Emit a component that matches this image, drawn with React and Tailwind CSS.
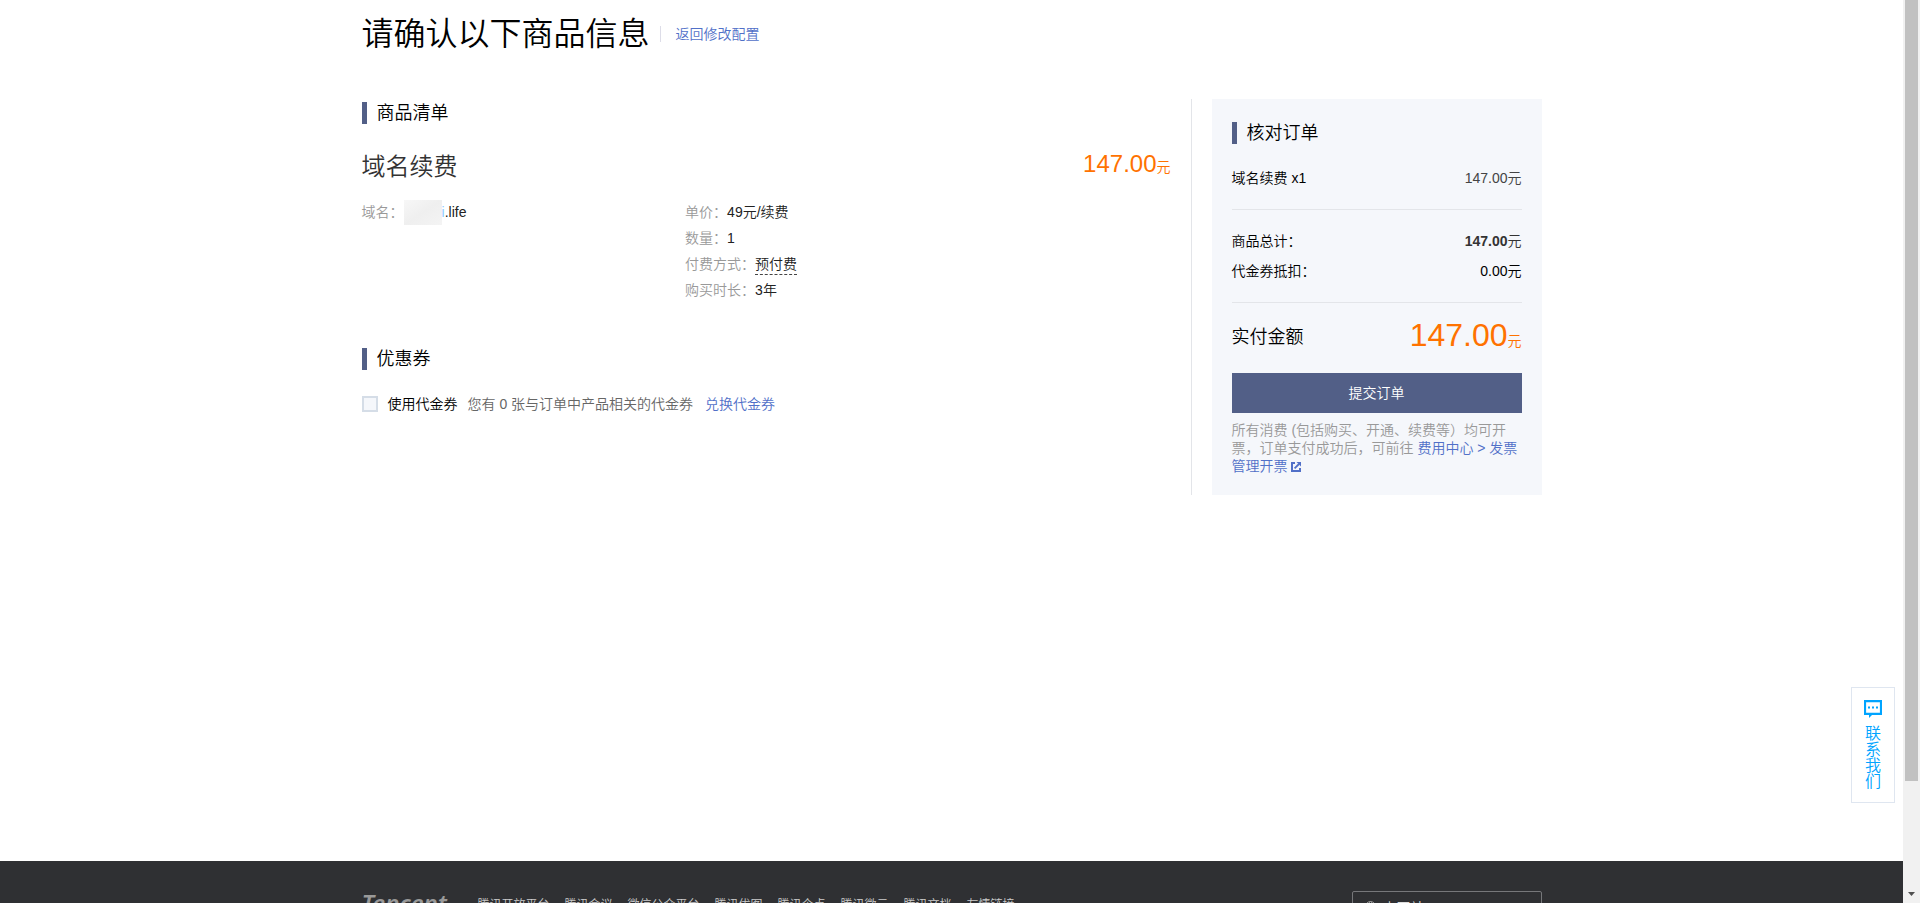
import React from "react";

const footerLinks = [
  "腾讯开放平台",
  "腾讯会议",
  "微信公众平台",
  "腾讯优图",
  "腾讯企点",
  "腾讯微云",
  "腾讯文档",
  "友情链接",
];

function SectionTitle({ children }) {
  return (
    <h2 className="flex h-[22px] items-center border-l-5 border-[#525f87] pl-[10px] text-lg leading-[22px]">
      {children}
    </h2>
  );
}

function Detail({ label, children }) {
  return (
    <div className="flex h-[26px] items-center">
      <dt className="text-[#999]">{label}：</dt>
      <dd className="text-[#222]">{children}</dd>
    </div>
  );
}

function ProductList() {
  return (
    <section>
      <SectionTitle>商品清单</SectionTitle>
      <div className="mt-6 flex items-end justify-between">
        <h3 className="text-2xl leading-8 text-[#333]">域名续费</h3>
        <p className="leading-8 text-[#ff7200]">
          <span className="text-2xl leading-8">147.00</span>元
        </p>
      </div>
      <div className="mt-4 flex">
        <dl className="w-2/5">
          <Detail label="域名">
            <span className="flex items-center">
              <span className="h-[25px] w-[38px] bg-linear-to-br from-[#f7f7f7] via-[#efefef] to-[#f4f4f4]" />
              <span className="text-[#8ccbff]">i</span>.life
            </span>
          </Detail>
        </dl>
        <dl className="flex-1">
          <Detail label="单价">49元/续费</Detail>
          <Detail label="数量">1</Detail>
          <Detail label="付费方式">
            <span className="block border-b border-dashed border-[#444] leading-5">预付费</span>
          </Detail>
          <Detail label="购买时长">3年</Detail>
        </dl>
      </div>
    </section>
  );
}

function Coupons() {
  return (
    <section className="mt-[45px]">
      <SectionTitle>优惠券</SectionTitle>
      <div className="mt-6 flex items-center leading-5">
        <input
          id="voucher"
          type="checkbox"
          className="size-4 appearance-none border-2 border-[#d5dde7] bg-[#f5f7fb] checked:bg-[#525f87]"
        />
        <label htmlFor="voucher" className="pl-[10px]">
          使用代金券
        </label>
        <span className="ml-[10px] text-[#666]">您有 0 张与订单中产品相关的代金券</span>
        <a href="#redeem" className="ml-3 text-[#5170c8]">
          兑换代金券
        </a>
      </div>
    </section>
  );
}

function ExternalIcon() {
  return (
    <svg className="ml-[3px] inline-block size-[10px] align-[-1px]" viewBox="0 0 10 10" fill="none" stroke="currentColor" aria-hidden="true">
      <path d="M4 1H1v8h8V6" strokeWidth="2" />
      <path d="M3.6 6.4 8 2" strokeWidth="1.8" />
      <path d="M5.5 0H10v4.5z" fill="currentColor" stroke="none" />
    </svg>
  );
}

function OrderSummary() {
  return (
    <aside className="w-[330px] shrink-0 bg-[#f5f7fb] px-5 pt-[23px] pb-5">
      <SectionTitle>核对订单</SectionTitle>
      <div className="mt-6 flex justify-between border-b border-[#e3e5e9] pb-[21px] leading-5">
        <span>域名续费 x1</span>
        <span className="text-[#444]">147.00元</span>
      </div>
      <div className="mt-[21px] flex flex-col gap-[10px] border-b border-[#e3e5e9] pb-[21px] leading-5">
        <div className="flex justify-between">
          <span>商品总计：</span>
          <span className="text-[#333]">
            <b>147.00</b>元
          </span>
        </div>
        <div className="flex justify-between">
          <span>代金券抵扣：</span>
          <span>0.00元</span>
        </div>
      </div>
      <div className="flex items-end justify-between pt-4">
        <span className="pb-1 text-lg leading-8">实付金额</span>
        <span className="leading-8 text-[#ff7200]">
          <span className="text-[32px] leading-8">147.00</span>元
        </span>
      </div>
      <button type="button" className="mt-4 h-10 w-full bg-[#525f87] text-white">
        提交订单
      </button>
      <p className="mt-2 leading-[18px] text-[#999]">
        所有消费 (包括购买、开通、续费等）均可开票，订单支付成功后，可前往{" "}
        <a href="#invoice" className="text-[#5170c8]">
          费用中心 &gt; 发票管理开票
          <ExternalIcon />
        </a>
      </p>
    </aside>
  );
}

function ContactWidget() {
  return (
    <a
      href="#contact"
      className="absolute right-2 bottom-[100px] flex h-[116px] w-11 flex-col items-center border border-[#dfe6f0] bg-white pt-3 text-base leading-4 text-[#00a4ff]"
    >
      <svg className="mb-2 size-[18px]" viewBox="0 0 18 18" fill="none" aria-hidden="true">
        <path d="M1 1.2h16v12.6H1z" stroke="currentColor" strokeWidth="2.2" />
        <path d="M5 13h5l-5 5z" fill="currentColor" />
        <path d="M4 6.5h2v2H4zM8 6.5h2v2H8zM12 6.5h2v2h-2z" fill="currentColor" />
      </svg>
      <span className="w-4 break-all">联系我们</span>
    </a>
  );
}

function Footer() {
  return (
    <footer className="h-[42px] shrink-0 overflow-hidden bg-[#2f3033]">
      <div className="mx-auto flex max-w-[1180px] items-start pt-[30px]">
        <a href="#tencent" className="w-[116px] font-['Noto_Sans',sans-serif] text-2xl leading-6 font-semibold text-[#999] italic">
          Tencent
        </a>
        <nav className="flex gap-[15px] pt-1 text-xs leading-5 text-[#ccc]">
          {footerLinks.map((name) => (
            <a key={name} href="#link">
              {name}
            </a>
          ))}
        </nav>
        <button type="button" className="ml-auto flex h-[34px] w-[190px] items-center rounded-xs border border-[#76777a] pl-3 text-[#ddd]">
          <svg className="mr-1 size-[14px]" viewBox="0 0 14 14" fill="none" stroke="#999" aria-hidden="true">
            <circle cx="5.5" cy="5.5" r="5" />
            <ellipse cx="5.5" cy="5.5" rx="2" ry="5" />
            <path d="M.5 5.5h10" />
          </svg>
          中国站
        </button>
      </div>
    </footer>
  );
}

function ScrollTrack() {
  return (
    <div className="flex h-full w-[17px] shrink-0 flex-col items-center justify-between bg-[#f1f1f1]" aria-hidden="true">
      <div className="h-[86.5%] w-[13px] bg-[#c1c1c1]" />
      <svg className="mb-[7px] h-1 w-[7px]" viewBox="0 0 7 4" fill="#505050">
        <path d="M0 0h7L3.5 4z" />
      </svg>
    </div>
  );
}

export default function App() {
  return (
    <div className="flex h-screen overflow-hidden bg-white font-['Liberation_Sans','Noto_Sans_CJK_SC',sans-serif] text-sm font-[350] text-black">
      <div className="relative flex min-w-0 flex-1 flex-col">
        <main className="min-h-0 flex-1">
          <div className="mx-auto max-w-[1180px]">
            <header className="flex h-[67px] items-center">
              <h1 className="text-[32px] leading-10">请确认以下商品信息</h1>
              <span className="ml-[10px] h-4 w-px bg-[#dddde8]" />
              <a href="#back" className="ml-[15px] text-[#5170c8]">
                返回修改配置
              </a>
            </header>
            <div className="mt-8 flex gap-5">
              <div className="min-w-0 flex-1 border-r border-[#e3e5e9] pt-[3px] pr-5">
                <ProductList />
                <Coupons />
              </div>
              <OrderSummary />
            </div>
          </div>
        </main>
        <Footer />
        <ContactWidget />
      </div>
      <ScrollTrack />
    </div>
  );
}
